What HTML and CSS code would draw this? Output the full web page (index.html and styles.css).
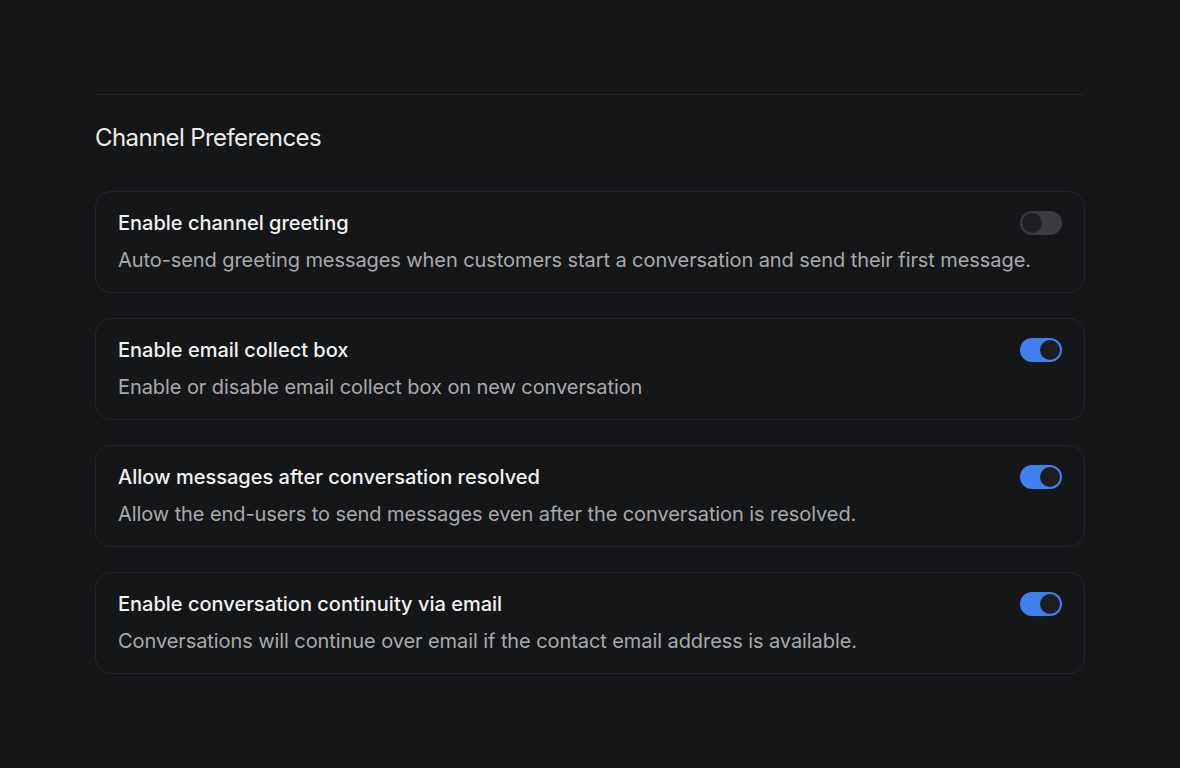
FILE: index.html
```html
<!DOCTYPE html>
<html>
<head>
<meta charset="utf-8">
<link rel="stylesheet" href="styles.css">
</head>
<body>
<main class="page">
  <hr class="divider">
  <h2 class="heading">Channel Preferences</h2>
  <div class="list">
    <div class="card">
      <div class="row">
        <div class="title">Enable channel greeting</div>
        <span class="toggle"></span>
      </div>
      <div class="desc">Auto-send greeting messages when customers start a conversation and send their first message.</div>
    </div>
    <div class="card">
      <div class="row">
        <div class="title">Enable email collect box</div>
        <span class="toggle on"></span>
      </div>
      <div class="desc">Enable or disable email collect box on new conversation</div>
    </div>
    <div class="card">
      <div class="row">
        <div class="title">Allow messages after conversation resolved</div>
        <span class="toggle on"></span>
      </div>
      <div class="desc">Allow the end-users to send messages even after the conversation is resolved.</div>
    </div>
    <div class="card">
      <div class="row">
        <div class="title">Enable conversation continuity via email</div>
        <span class="toggle on"></span>
      </div>
      <div class="desc">Conversations will continue over email if the contact email address is available.</div>
    </div>
  </div>
</main>
</body>
</html>
```
FILE: styles.css
```css
html, body {
  margin: 0;
  padding: 0;
  background: #151618;
  font-family: Inter, "Noto Sans", sans-serif;
}
.page {
  width: 990px;
  margin: 0 auto;
  padding-top: 94px;
}
.divider {
  border: 0;
  border-top: 1px solid #232428;
  margin: 0;
}
.heading {
  margin: 27px 0 0;
  font-size: 24px;
  line-height: 32px;
  font-weight: 400;
  letter-spacing: -0.6px;
  color: #ececed;
}
.list {
  display: flex;
  flex-direction: column;
  gap: 25px;
  margin-top: 37px;
}
.card {
  border: 1px solid #24252a;
  border-radius: 16px;
  padding: 17px 22px 18px 22px;
}
.row {
  display: flex;
  justify-content: space-between;
  align-items: center;
}
.title {
  font-size: 20px;
  line-height: 28px;
  font-weight: 500;
  color: #f2f2f3;
}
.desc {
  margin-top: 9px;
  font-size: 20px;
  line-height: 28px;
  letter-spacing: -0.08px;
  color: #a9a9ad;
}
.toggle {
  position: relative;
  width: 42px;
  height: 24px;
  border-radius: 12px;
  background: #3a3b40;
  flex: none;
}
.toggle::after {
  content: "";
  position: absolute;
  top: 2px;
  left: 2px;
  width: 20px;
  height: 20px;
  border-radius: 50%;
  background: #1f2024;
}
.toggle.on {
  background: #3f80ee;
}
.toggle.on::after {
  left: 20px;
  background: #1d1e22;
}
```
